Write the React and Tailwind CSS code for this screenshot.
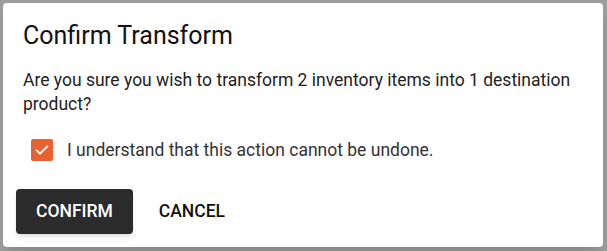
import React, { useState } from 'react';

export default function App() {
  const [checked, setChecked] = useState(true);

  return (
    <div className="w-[607px] h-[251px] bg-[#9d9d9d] p-[3px] pr-[4px] pb-[4px] font-['Roboto',sans-serif]">
      <div className="h-full bg-white rounded-[4px] shadow-lg flex flex-col">
        <h2 className="text-[25px] leading-[30px] text-[#111] pt-[18px] px-[20px]">Confirm Transform</h2>
        <p className="text-[17.5px] leading-[24px] text-[#222] px-[20px] mt-[17px]">
          Are you sure you wish to transform 2 inventory items into 1 destination product?
        </p>
        <label className="flex items-center gap-[14px] pl-[28px] mt-[23px] cursor-pointer">
          <button
            onClick={() => setChecked(!checked)}
            className="w-[22px] h-[22px] rounded-[2px] bg-[#e9612e] flex items-center justify-center"
          >
            {checked && (
              <svg width="16" height="16" viewBox="0 0 24 24" fill="none" stroke="white" strokeWidth="3" strokeLinecap="round" strokeLinejoin="round">
                <path d="M4 12.5l5 5L20 6.5" />
              </svg>
            )}
          </button>
          <span className="text-[17.5px] leading-[22px] text-[#333]">I understand that this action cannot be undone.</span>
        </label>
        <div className="flex items-center gap-[8px] px-[13px] mt-[28px]">
          <button className="h-[45px] px-[20px] rounded-[4px] bg-[#2b2b2b] text-white text-[17.5px] font-medium uppercase shadow-md">
            Confirm
          </button>
          <button className="h-[45px] px-[18px] text-[#111] text-[17.5px] font-medium uppercase">
            Cancel
          </button>
        </div>
      </div>
    </div>
  );
}
